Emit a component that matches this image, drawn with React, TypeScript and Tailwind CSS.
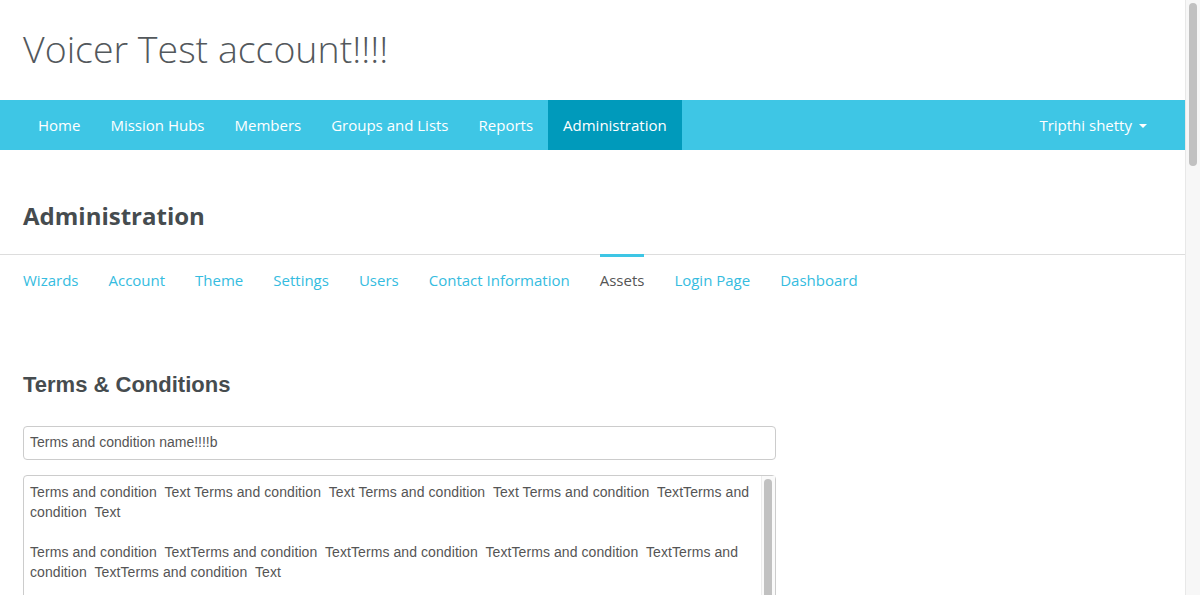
import React from 'react';

const navItems = ['Home', 'Mission Hubs', 'Members', 'Groups and Lists', 'Reports', 'Administration'];
const tabs = ['Wizards', 'Account', 'Theme', 'Settings', 'Users', 'Contact Information', 'Assets', 'Login Page', 'Dashboard'];

const termsLines = [
  'Terms and condition  Text Terms and condition  Text Terms and condition  Text Terms and condition  TextTerms and',
  'condition  Text',
  '',
  'Terms and condition  TextTerms and condition  TextTerms and condition  TextTerms and condition  TextTerms and',
  'condition  TextTerms and condition  Text',
];

const App: React.FC = () => {
  return (
    <div className="flex h-[595px] w-[1200px] overflow-hidden bg-white">
      <div className="w-[1185px] shrink-0 font-['Open_Sans',sans-serif]">
        {/* Header */}
        <div className="flex h-[100px] items-center px-[23px]">
          <h1 className="text-[37.5px] font-light leading-none text-[#53585c] -mt-[2px]">Voicer Test account!!!!</h1>
        </div>

        {/* Top nav */}
        <div className="flex h-[50px] items-stretch justify-between bg-[#3ec6e5] px-[23px] text-[15px] text-white">
          <nav className="flex">
            {navItems.map((item) => (
              <a
                key={item}
                className={`flex items-center px-[15px] ${item === 'Administration' ? 'bg-[#009abb]' : ''}`}
              >
                {item}
              </a>
            ))}
          </nav>
          <a className="flex items-center gap-[7px] px-[15px]">
            Tripthi shetty
            <span className="mt-[2px] h-0 w-0 border-x-[4px] border-t-[4px] border-x-transparent border-t-white" />
          </a>
        </div>

        {/* Page heading */}
        <div className="h-[105px] border-b border-[#dddddd] px-[23px] pt-[50px]">
          <h2 className="text-[24px] font-bold leading-[32px] text-[#464c4f]">Administration</h2>
        </div>

        {/* Sub tabs */}
        <div className="flex gap-[30px] px-[23px] text-[15px]">
          {tabs.map((tab) => (
            <a
              key={tab}
              className={`-mt-[1px] border-t-[3px] pt-[12px] ${
                tab === 'Assets' ? 'border-[#3ec6e5] text-[#555555]' : 'border-transparent text-[#35bce0]'
              }`}
            >
              {tab}
            </a>
          ))}
        </div>

        {/* Terms & Conditions */}
        <div className="px-[23px] pt-[78px] font-['Liberation_Sans',Arial,sans-serif]">
          <h3 className="text-[22px] font-bold leading-[30px] text-[#464c4f]">Terms &amp; Conditions</h3>
          <div className="mt-[26px] flex h-[34px] w-[753px] items-center rounded-[4px] border border-[#cccccc] px-[6px] text-[14px] text-[#555555]">
            Terms and condition name!!!!b
          </div>
          <div className="mt-[15px] flex h-[200px] w-[753px] rounded-t-[4px] border border-[#cccccc]">
            <div className="flex-1 px-[6px] pt-[6px] text-[14px] leading-[20px] tracking-[0.08px] text-[#555555] whitespace-pre">
              {termsLines.map((line, i) => (
                <div key={i} className="h-[20px]">{line}</div>
              ))}
            </div>
            <div className="w-[14px] border-l border-[#ececec] bg-[#fafafa] px-[2px] pt-[3px]">
              <div className="h-[180px] w-[8px] rounded-full bg-[#c1c1c1]" />
            </div>
          </div>
        </div>
      </div>

      {/* Page scrollbar */}
      <div className="w-[15px] shrink-0 border-l border-[#e8e8e8] bg-[#f7f7f7] pl-[3px] pt-[3px]">
        <div className="h-[163px] w-[8px] rounded-full bg-[#c1c1c1]" />
      </div>
    </div>
  );
};

export default App;
